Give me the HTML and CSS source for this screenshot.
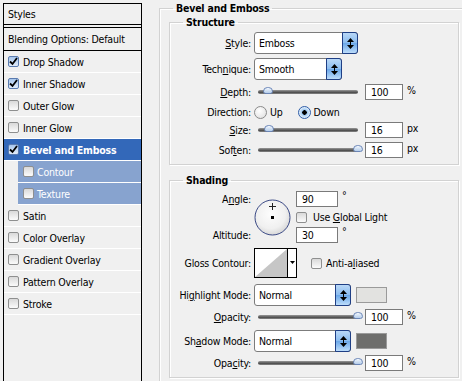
FILE: index.html
```html
<!DOCTYPE html>
<html lang="en">
<head>
    <meta charset="UTF-8">
    <meta name="viewport" content="width=device-width, initial-scale=1.0">
    <title>Layer Style - Bevel and Emboss</title>
    <link rel="stylesheet" href="styles.css">
</head>
<body>

<div class="dialog">
    <div class="styles-list">
        <div class="list-head">Styles</div>
        <div class="list-blend">Blending Options: Default</div>
        <div class="list-row"><span class="check on"><svg width="9" height="9" viewBox="0 0 9 9"><path d="M1 4.5 L3.5 7 L8 1" fill="none" stroke="#000" stroke-width="1.8"/></svg></span>Drop Shadow</div>
        <div class="list-row"><span class="check on"><svg width="9" height="9" viewBox="0 0 9 9"><path d="M1 4.5 L3.5 7 L8 1" fill="none" stroke="#000" stroke-width="1.8"/></svg></span>Inner Shadow</div>
        <div class="list-row"><span class="check"></span>Outer Glow</div>
        <div class="list-row"><span class="check"></span>Inner Glow</div>
        <div class="list-row active"><span class="check on"><svg width="9" height="9" viewBox="0 0 9 9"><path d="M1 4.5 L3.5 7 L8 1" fill="none" stroke="#000" stroke-width="1.8"/></svg></span>Bevel and Emboss</div>
        <div class="list-row sub"><span class="check"></span>Contour</div>
        <div class="list-row sub"><span class="check"></span>Texture</div>
        <div class="list-row"><span class="check"></span>Satin</div>
        <div class="list-row"><span class="check"></span>Color Overlay</div>
        <div class="list-row"><span class="check"></span>Gradient Overlay</div>
        <div class="list-row"><span class="check"></span>Pattern Overlay</div>
        <div class="list-row"><span class="check"></span>Stroke</div>
    </div>

    <div class="settings">
        <fieldset class="group">
            <legend>Bevel and Emboss</legend>

            <fieldset class="box structure">
                <legend>Structure</legend>

                <div class="row sel-row">
                    <span class="lbl"><u>S</u>tyle:</span>
                    <span class="select w-style">
                        <span class="select-val">Emboss</span>
                        <span class="select-btn"><svg width="7" height="11" viewBox="0 0 7 11"><path d="M0 4 L3.5 0 L7 4 Z M0 7 L3.5 11 L7 7 Z" fill="#000"/><path d="M3.5 4 V7" stroke="#000"/></svg></span>
                    </span>
                </div>

                <div class="row sel-row">
                    <span class="lbl">Tech<u>n</u>ique:</span>
                    <span class="select w-tech">
                        <span class="select-val">Smooth</span>
                        <span class="select-btn"><svg width="7" height="11" viewBox="0 0 7 11"><path d="M0 4 L3.5 0 L7 4 Z M0 7 L3.5 11 L7 7 Z" fill="#000"/><path d="M3.5 4 V7" stroke="#000"/></svg></span>
                    </span>
                </div>

                <div class="row">
                    <span class="lbl"><u>D</u>epth:</span>
                    <span class="slider"><span class="thumb" style="left: 5px"></span></span>
                    <span class="num">100</span>
                    <span class="unit">%</span>
                </div>

                <div class="row dir-row">
                    <span class="lbl">Direction:</span>
                    <span class="radio"></span><span class="opt">Up</span>
                    <span class="radio on"></span><span class="opt">Down</span>
                </div>

                <div class="row">
                    <span class="lbl"><u>S</u>ize:</span>
                    <span class="slider"><span class="thumb" style="left: 6px"></span></span>
                    <span class="num">16</span>
                    <span class="unit">px</span>
                </div>

                <div class="row">
                    <span class="lbl">Sof<u>t</u>en:</span>
                    <span class="slider"><span class="thumb" style="left: 95px"></span></span>
                    <span class="num">16</span>
                    <span class="unit">px</span>
                </div>
            </fieldset>

            <fieldset class="box shading">
                <legend>Shading</legend>

                <div class="dial-grid">
                    <span class="lbl angle-lbl">A<u>n</u>gle:</span>
                    <span class="lbl alt-lbl">Altitude:</span>
                    <svg class="dial" width="37" height="37" viewBox="0 0 37 37">
                        <defs>
                            <radialGradient id="dialFill" cx="0.45" cy="0.4" r="0.6">
                                <stop offset="0" stop-color="#fdfdfd"/>
                                <stop offset="0.7" stop-color="#f0f0f0"/>
                                <stop offset="1" stop-color="#d8d8d8"/>
                            </radialGradient>
                        </defs>
                        <circle cx="18.5" cy="18.5" r="17.5" fill="url(#dialFill)" stroke="#3b4a86"/>
                        <path d="M15 7.5 H22 M18.5 4 V11" stroke="#222" stroke-width="1"/>
                        <rect x="17" y="17" width="3" height="3" fill="#000"/>
                    </svg>
                    <span class="dial-val angle-val"><span class="num wide">90</span><span class="deg">°</span></span>
                    <span class="dial-val global-val"><span class="check"></span><span>Use <u>G</u>lobal Light</span></span>
                    <span class="dial-val alt-val"><span class="num wide">30</span><span class="deg">°</span></span>
                </div>

                <div class="row gloss-row">
                    <span class="lbl">Gloss Contour:</span>
                    <svg class="contour" width="43" height="30" viewBox="0 0 43 30">
                        <rect x="0.5" y="0.5" width="42" height="29" fill="#fff" stroke="#000"/>
                        <path d="M1 29 L33 1 V29 Z" fill="#c6c6c6"/>
                        <path d="M33.5 1 V29" stroke="#000"/>
                        <path d="M36 13 H41 L38.5 16 Z" fill="#000"/>
                    </svg>
                    <span class="check aa-check"></span><span>Anti-a<u>l</u>iased</span>
                </div>

                <div class="row sel-row mode-row">
                    <span class="lbl">Hi<u>g</u>hlight Mode:</span>
                    <span class="select w-mode">
                        <span class="select-val">Normal</span>
                        <span class="select-btn"><svg width="7" height="11" viewBox="0 0 7 11"><path d="M0 4 L3.5 0 L7 4 Z M0 7 L3.5 11 L7 7 Z" fill="#000"/><path d="M3.5 4 V7" stroke="#000"/></svg></span>
                    </span>
                    <span class="swatch light"></span>
                </div>

                <div class="row opacity-row">
                    <span class="lbl"><u>O</u>pacity:</span>
                    <span class="slider"><span class="thumb" style="left: 95px"></span></span>
                    <span class="num">100</span>
                    <span class="unit">%</span>
                </div>

                <div class="row sel-row mode-row">
                    <span class="lbl">Sh<u>a</u>dow Mode:</span>
                    <span class="select w-mode">
                        <span class="select-val">Normal</span>
                        <span class="select-btn"><svg width="7" height="11" viewBox="0 0 7 11"><path d="M0 4 L3.5 0 L7 4 Z M0 7 L3.5 11 L7 7 Z" fill="#000"/><path d="M3.5 4 V7" stroke="#000"/></svg></span>
                    </span>
                    <span class="swatch dark"></span>
                </div>

                <div class="row opacity-row">
                    <span class="lbl">Opa<u>c</u>ity:</span>
                    <span class="slider"><span class="thumb" style="left: 95px"></span></span>
                    <span class="num">100</span>
                    <span class="unit">%</span>
                </div>
            </fieldset>
        </fieldset>
    </div>
</div>

</body>
</html>
```

FILE: styles.css
```css
body {
    margin: 0;
    background: #f0f0f0;
    font-family: "DejaVu Sans Condensed", "DejaVu Sans", sans-serif;
    font-size: 10.5px;
    letter-spacing: -0.2px;
    color: #000;
    overflow: hidden;
}
u {
    text-decoration: underline;
    text-underline-offset: 1px;
}
.dialog {
    display: flex;
    align-items: flex-start;
    height: 381px;
    overflow: hidden;
}

/* left list of effects */
.styles-list {
    margin: 3px 0 0 3px;
    width: 137px;
    height: 377px;
    border: 1px solid #000;
    border-bottom: 0;
    flex: none;
}
.list-head {
    height: 20px;
    line-height: 20px;
    padding-left: 4px;
    border-bottom: 1px solid #000;
}
.list-blend {
    margin-top: 2px;
    height: 22px;
    line-height: 22px;
    padding-left: 4px;
    border-top: 1px solid #000;
    border-bottom: 1px solid #000;
}
.list-row {
    display: flex;
    align-items: center;
    height: 21px;
    padding-left: 4px;
    border-bottom: 1px solid #fff;
}
.list-row.active {
    background: #3368b9;
    color: #fff;
    font-weight: bold;
}
.list-row.sub {
    margin-left: 14px;
    padding-left: 5px;
    background: #87a3cf;
    color: #fff;
}
.list-row .check {
    margin-right: 4px;
}
.list-row.sub .check {
    margin-right: 3px;
}

/* checkboxes and radios */
.check {
    display: inline-flex;
    align-items: center;
    justify-content: center;
    width: 11px;
    height: 11px;
    box-sizing: border-box;
    border: 1px solid #8e8f8f;
    border-radius: 2px;
    background: linear-gradient(#d9d9d9, #fbfbfb);
    flex: none;
}
.check.on {
    border-color: #5a7bb0;
    background: linear-gradient(#a7c6ec, #e2ecf9);
}
.radio {
    width: 13px;
    height: 13px;
    box-sizing: border-box;
    border: 1px solid #8a8a8a;
    border-radius: 50%;
    background: radial-gradient(circle at 40% 35%, #fff, #dcdcdc);
    flex: none;
}
.radio.on {
    margin-left: 15px;
    border-color: #2f5da8;
    background: radial-gradient(circle, #000 0 2px, #9cc7f1 2.5px, #e4f0fb 5.5px);
}
.opt {
    margin-left: 3px;
}

/* right side */
.settings {
    margin-left: 17px;
    flex: 1;
    min-width: 0;
}
fieldset {
    margin: 0;
    padding: 0;
    min-width: 0;
    border: 1px solid #d2d2d2;
    box-shadow: inset 1px 1px #fff, 1px 1px #fff;
}
legend {
    font-weight: bold;
    line-height: 14px;
    padding: 0 3px;
}
.group {
    margin-top: 1px;
    padding-left: 9px;
    height: 380px;
    box-sizing: border-box;
    border-right: 0;
    border-bottom: 0;
}
.group legend {
    margin-left: 4px;
}
.box {
    width: 290px;
    box-sizing: border-box;
}
.box legend {
    margin-left: 13px;
}
.structure {
    padding: 3px 0 6px;
}
.shading {
    margin-top: 8px;
    padding: 4px 0 6px;
}

.row {
    display: flex;
    align-items: center;
    height: 16px;
    margin-bottom: 4px;
}
.row.sel-row {
    height: 22px;
}
.row.dir-row {
    margin-bottom: 2px;
}
.structure .row:last-child {
    margin-bottom: 0;
}
.lbl {
    width: 81px;
    margin-right: 3px;
    text-align: right;
    white-space: nowrap;
    flex: none;
}

/* drop-down lists */
.select {
    display: flex;
    height: 22px;
    box-sizing: border-box;
    border: 1px solid #7c7c7c;
    border-radius: 3px;
    background: #fff;
}
.w-style {
    width: 104px;
}
.w-tech {
    width: 88px;
}
.w-mode {
    width: 97px;
}
.select-val {
    flex: 1;
    padding-left: 4px;
    line-height: 20px;
}
.select-btn {
    display: flex;
    align-items: center;
    justify-content: center;
    width: 14px;
    margin: -1px -1px -1px 0;
    border: 1px solid #1f3f85;
    border-radius: 0 3px 3px 0;
    background: linear-gradient(#b9d8f7, #8dbdf0 48%, #6ca8e9 52%, #bcdcfa);
}

/* sliders and number fields */
.slider {
    position: relative;
    width: 100px;
    height: 4px;
    margin-left: 4px;
    border-radius: 2px;
    background: linear-gradient(#9a9a9a, #4e4e4e 60%, #8a8a8a);
    flex: none;
}
.thumb {
    position: absolute;
    top: -3px;
    width: 10px;
    height: 7px;
    box-sizing: border-box;
    border: 1px solid #6b86b8;
    border-radius: 5px 5px 3px 3px;
    background: linear-gradient(#f2f7fd, #b5cdea);
}
.num {
    width: 38px;
    height: 16px;
    box-sizing: border-box;
    margin-left: 7px;
    padding-left: 5px;
    line-height: 14px;
    border: 1px solid #7a7a7a;
    background: #fff;
    flex: none;
}
.num.wide {
    width: 42px;
    margin-left: 0;
}
.unit {
    margin-left: 4px;
    align-self: flex-start;
    line-height: 12px;
}
.deg {
    margin-left: 4px;
    align-self: flex-start;
    line-height: 8px;
}

/* angle / altitude block */
.dial-grid {
    display: grid;
    grid-template-columns: 84px 37px auto;
    grid-template-rows: 16px 16px 16px;
    row-gap: 2px;
    align-items: center;
}
.angle-lbl {
    grid-column: 1;
    grid-row: 1;
}
.alt-lbl {
    grid-column: 1;
    grid-row: 3;
}
.dial {
    grid-column: 2;
    grid-row: 1 / 4;
}
.dial-val {
    grid-column: 3;
    display: flex;
    align-items: center;
    height: 16px;
    margin-left: 5px;
}
.angle-val {
    grid-row: 1;
}
.global-val {
    grid-row: 2;
}
.global-val .check {
    margin-right: 6px;
}
.alt-val {
    grid-row: 3;
}

.gloss-row {
    height: 30px;
    margin-top: 5px;
    margin-bottom: 6px;
}
.aa-check {
    margin: 0 4px 0 14px;
}
.mode-row {
    margin-bottom: 3px;
}
.opacity-row {
    margin-bottom: 5px;
}
.shading .row:last-child {
    margin-bottom: 0;
}
.swatch {
    width: 31px;
    height: 16px;
    box-sizing: border-box;
    margin-left: 5px;
    border: 1px solid #9a9a9a;
}
.swatch.light {
    background: #e2e2e0;
}
.swatch.dark {
    background: #6e6e6c;
}
```
